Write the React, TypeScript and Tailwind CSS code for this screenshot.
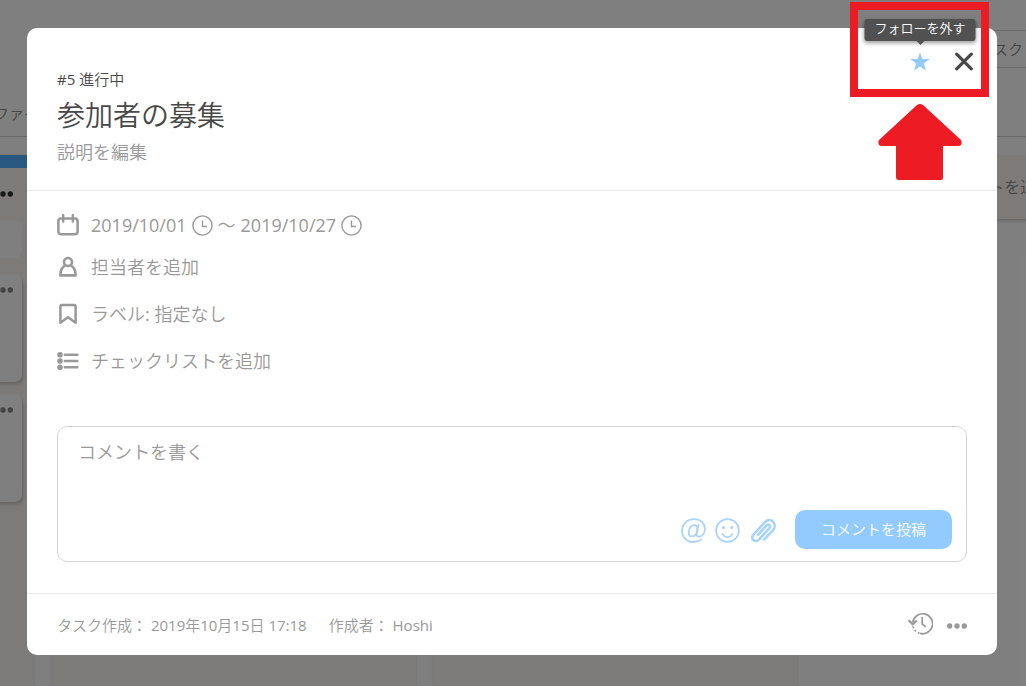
import React from 'react';

const ClockIcon = () => (
  <svg className="size-[21px] shrink-0" viewBox="0 0 21 21" fill="none" stroke="currentColor" strokeWidth="1.4">
    <circle cx="10.5" cy="10.5" r="9.6" />
    <path d="M10.5 5.5v6h4.5" />
  </svg>
);

const CalendarIcon = () => (
  <svg className="size-[22px] shrink-0" viewBox="0 0 22 22" fill="none" stroke="currentColor" strokeWidth="2.5">
    <rect x="1.4" y="4.600" width="19.200" height="15.600" rx="2.600" />
    <path d="M6.200 1v6.600M15.800 1v6.600" strokeWidth="2.400" strokeLinecap="round" />
  </svg>
);

const PersonIcon = () => (
  <svg className="size-[22px] shrink-0" viewBox="0 0 22 22" fill="none" stroke="currentColor" strokeWidth="2.600">
    <circle cx="11" cy="6" r="4" />
    <path d="M8 9.600C5 11.200 3.400 14.800 3.400 19.400h15.200c0-4.600-1.600-8.200-4.600-9.800" strokeLinejoin="round" />
  </svg>
);

const BookmarkIcon = () => (
  <svg className="size-[22px] shrink-0" viewBox="0 0 22 22" fill="none" stroke="currentColor" strokeWidth="2.500" strokeLinejoin="round">
    <path d="M3.400 3.400c0-.8.5-1.300 1.300-1.300h12.600c.8 0 1.300.5 1.300 1.300v16.400L11 14.200l-7.600 5.600z" />
  </svg>
);

const ChecklistIcon = () => (
  <svg className="size-[22px] shrink-0" viewBox="0 0 22 22" fill="currentColor">
    <circle cx="3" cy="4.800" r="2.800" />
    <circle cx="3" cy="11" r="2.800" />
    <circle cx="3" cy="17.300" r="2.800" />
    <path d="M7.800 4.800h12.600M7.800 11h12.600M7.800 17.300h12.600" stroke="currentColor" strokeWidth="2.400" strokeLinecap="round" />
  </svg>
);

const SmileIcon = () => (
  <svg className="size-[25px]" viewBox="0 0 25 25" fill="none" stroke="currentColor" strokeWidth="1.700">
    <circle cx="12.500" cy="12.500" r="11.400" />
    <path d="M7.500 15.800c1.100 2.100 2.800 3.200 5 3.200s3.900-1.100 5-3.200" strokeLinecap="round" />
    <circle cx="8.300" cy="9.500" r="1.600" fill="currentColor" stroke="none" />
    <circle cx="16.700" cy="9.500" r="1.600" fill="currentColor" stroke="none" />
  </svg>
);

const ClipIcon = () => (
  <svg className="size-[25px]" viewBox="0 0 25 25" fill="none" stroke="currentColor" strokeWidth="2.600" strokeLinecap="round" strokeLinejoin="round">
    <path d="M13.200 21.600 22 12.200c2.200-2.700 2.200-6.400 0-8.600-2.100-2.100-5.500-2-7.800.3L2.700 16.300c-1.700 1.900-1.700 4.300-.3 5.700 1.500 1.500 3.900 1.400 5.600-.4L18.200 10.300c1-1.100 1.100-2.400.3-3.100-.8-.8-2-.7-3 .3L7 16.800" />
  </svg>
);

const AtIcon = () => (
  <svg className="size-[25px]" viewBox="0 0 25 25" fill="none" stroke="currentColor" strokeWidth="1.800" strokeLinecap="round">
    <path d="M20.500 21.400C18.300 23.100 15.600 24 12.500 24 5.700 24 1 19.400 1 12.800 1 6.300 5.900 1.100 12.900 1.100c6.500 0 11 4 11 9.800 0 4.700-2.500 7.700-5.600 7.700-2.200 0-3-1.300-2.600-3.400L17.500 6.800" />
    <path d="M16.400 11.200c0 4.200-2.300 7.200-5.100 7.200-2.200 0-3.600-1.500-3.600-4 0-4 2.500-7.300 5.500-7.300 2 0 3.200 1.500 3.200 4.100z" />
  </svg>
);

const HistoryIcon = () => (
  <svg className="size-[25px]" viewBox="0 0 25 25" fill="none" stroke="currentColor" strokeWidth="1.700">
    <path d="M4.700 10.500A10 10 0 1 1 12 21.400" />
    <path d="M.6 8.200l4 4 4.200-3.600" strokeWidth="2.200" />
    <path d="M14.200 5v7l3.600 2.800" />
    <path d="M11.500 21.200A9.800 9.800 0 0 1 4.800 14" strokeDasharray="1.800 2.200" />
  </svg>
);

const Dots = () => (
  <svg className="h-[6px] w-5" viewBox="0 0 20 6" fill="currentColor">
    <circle cx="2.700" cy="3" r="2.700" />
    <circle cx="10" cy="3" r="2.700" />
    <circle cx="17.300" cy="3" r="2.700" />
  </svg>
);

const Card = () => (
  <div className="flex h-[108px] items-start justify-end rounded-lg bg-white pt-[13px] pr-[9px] text-[#888] shadow-[2px_3px_3px_rgba(0,0,0,0.15)]">
    <button aria-label="カードメニュー" className="block"><Dots /></button>
  </div>
);

const Board = () => (
  <div className="flex h-screen flex-col overflow-hidden bg-white text-[15px] text-[#888]">
    <header className="flex h-[137px] shrink-0 justify-between border-b border-[#d2d2d2]">
      <nav className="-ml-[6px] flex items-end pb-[13px]">
        <a href="#files" className="leading-5">ファイル</a>
      </nav>
      <button className="mt-[30px] flex h-[38px] w-40 items-center justify-end border-y border-[#d2d2d2] pr-[3px]">
        タスク
      </button>
    </header>
    <main className="-ml-[331px] flex min-h-0 flex-1 gap-[17px] pt-[18px]">
      <section className="w-[365px] shrink-0 bg-[#faf7f4] shadow-[0_0_2px_rgba(0,0,0,0.15)]">
        <div className="h-[13px] rounded-t-lg bg-[#50b0ff]" />
        <div className="flex h-[52px] items-center justify-end pr-[21px] text-[#333]">
          <button aria-label="リストメニュー" className="block"><Dots /></button>
        </div>
        <div className="flex flex-col gap-3 px-3">
          <div className="mb-1 h-[38px] rounded-lg bg-white" />
          <Card />
          <Card />
        </div>
      </section>
      <section className="w-[365px] shrink-0 bg-[#faf7f4] shadow-[0_0_2px_rgba(0,0,0,0.15)]" />
      <section className="w-[365px] shrink-0 bg-[#faf7f4] shadow-[0_0_2px_rgba(0,0,0,0.15)]" />
      <button className="h-16 w-[365px] shrink-0 bg-[#faf7f4] text-base shadow-[0_2px_3px_rgba(0,0,0,0.2)]">
        + リストを追加
      </button>
    </main>
  </div>
);

const TaskDialog = () => (
  <div role="dialog" aria-labelledby="task-title" className="rounded-[10px] bg-white text-[#999]">
    <div className="flex items-start justify-between border-b border-[#ebebeb] pr-[23px] pb-[26px] pl-[30px]">
      <div className="pt-[41px] text-[#484848]">
        <p className="text-[15px] leading-5">#5 進行中</p>
        <h1 id="task-title" className="mt-2 text-[28px] leading-9">参加者の募集</h1>
        <button className="mt-[7px] block text-lg leading-6 text-[#999]">説明を編集</button>
      </div>
      <div className="flex items-center gap-6 pt-6">
        <div className="relative">
          <button aria-label="フォローを外す" className="block text-[#93cbff]">
            <svg className="size-5" viewBox="0 0 20 20" fill="currentColor">
              <path d="M10 .2l2.300 6.900h7.400l-5.900 4.400 2.200 7.300L10 14.400l-6 4.400 2.200-7.300L.3 7.100h7.400z" />
            </svg>
          </button>
          <div role="tooltip" className="absolute bottom-full left-1/2 mb-[11px] -translate-x-1/2 rounded-[3px] bg-[#515151] px-[10px] pb-[3px] text-[13px] leading-[19px] whitespace-nowrap text-white shadow-[0_2px_4px_rgba(0,0,0,0.4)]">
            フォローを外す
            <span className="absolute top-full left-1/2 -translate-x-1/2 border-x-4 border-t-4 border-x-transparent border-t-[#515151]" />
          </div>
        </div>
        <button aria-label="閉じる" className="block text-[#484848]">
          <svg className="size-5" viewBox="0 0 20 20" stroke="currentColor" strokeWidth="3.200" strokeLinecap="round">
            <path d="M2.700 2.200l14.600 14.600M17.300 2.200l-14.600 14.600" />
          </svg>
        </button>
      </div>
    </div>

    <div className="px-[30px] pt-[22px] pb-[31px]">
      <div className="flex flex-col items-start gap-[23px] text-lg leading-6">
        <div className="-mb-[5px] flex h-6 items-center gap-3">
          <CalendarIcon />
          <div className="flex items-center gap-[5px]">
            <button>2019/10/01</button>
            <button aria-label="開始時刻"><ClockIcon /></button>
            <span>～</span>
            <button>2019/10/27</button>
            <button aria-label="終了時刻"><ClockIcon /></button>
          </div>
        </div>
        <button className="flex h-6 items-center gap-3"><PersonIcon />担当者を追加</button>
        <button className="flex h-6 items-center gap-3"><BookmarkIcon />ラベル: 指定なし</button>
        <button className="flex h-6 items-center gap-3"><ChecklistIcon />チェックリストを追加</button>
      </div>

      <form className="mt-[53px] rounded-[10px] border border-[#d5d5d5]" onSubmit={(e) => e.preventDefault()}>
        <textarea
          aria-label="コメント"
          placeholder="コメントを書く"
          className="block h-[83px] w-full resize-none px-5 pt-[13px] text-lg leading-6 outline-none placeholder:text-[#999]"
        />
        <div className="flex items-center justify-end pr-[14px] pb-3 text-[#a9d3ff]">
          <div className="mr-[19px] flex pt-[2px]">
            <button type="button" aria-label="メンション" className="mr-[9px]"><AtIcon /></button>
            <button type="button" aria-label="絵文字" className="mr-[11px]"><SmileIcon /></button>
            <button type="button" aria-label="添付ファイル"><ClipIcon /></button>
          </div>
          <button type="submit" className="h-[39px] rounded-[10px] bg-[#93cbff] px-[26px] text-[15px] text-white">
            コメントを投稿
          </button>
        </div>
      </form>
    </div>

    <footer className="flex h-[62px] items-center justify-between border-t border-[#ebebeb] px-[30px] text-[15px]">
      <div className="flex gap-[22px] pt-[2px]">
        <p>タスク作成： 2019年10月15日 17:18</p>
        <p>作成者： Hoshi</p>
      </div>
      <div className="flex items-center gap-[14px]">
        <button aria-label="履歴"><HistoryIcon /></button>
        <button aria-label="その他" className="pt-[3px]"><Dots /></button>
      </div>
    </footer>
  </div>
);

// Red frame and arrow pointing at the follow button
const Callout = () => (
  <div className="pointer-events-none absolute top-[2px] right-[37px]">
    <div className="h-[95px] w-[139px] border-8 border-[#ed1c24]" />
    <svg className="mx-auto mt-[7px] h-[76px] w-[84px]" viewBox="0 0 84 76" fill="#ed1c24">
      <path d="M39 1q3-2 6 0l38 35q2 5-2 6H65v32q0 2-2 2H21q-3 0-3-3V42H3q-4-1-2-6z" />
    </svg>
  </div>
);

const App = () => {
  return (
    <div className="relative overflow-hidden font-['Open_Sans','Noto_Sans_CJK_JP_DemiLight','Noto_Sans_CJK_JP',sans-serif]">
      <Board />
      <div className="absolute inset-0 bg-black/50 pt-7 pr-[29px] pl-[27px]">
        <TaskDialog />
      </div>
      <Callout />
    </div>
  );
};

export default App;
